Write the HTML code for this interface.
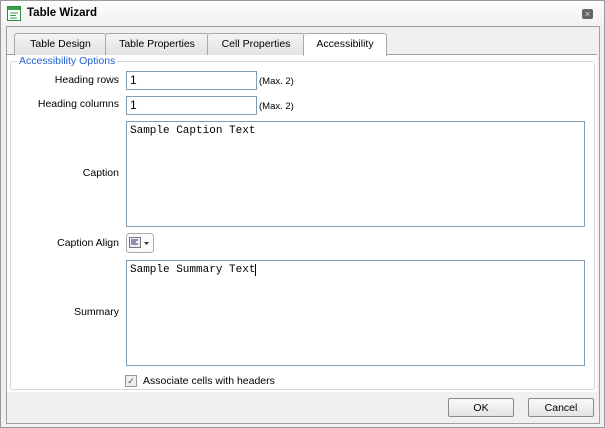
<!DOCTYPE html>
<html><head><style>
body{margin:0;width:605px;height:428px;background:#fff;font-family:"Liberation Sans",sans-serif;font-size:10.5px;color:#000;position:relative;overflow:hidden}
.a{position:absolute}
.outer{left:0;top:0;width:603px;height:426px;border:1px solid #9a9a9a;background:linear-gradient(#fcfcfc,#f0f0f0 30px,#f0f0f0)}
.title{left:27px;top:7px;font-weight:bold;font-size:11.5px}
.strip{left:6px;top:26px;width:592px;height:396px;border:1px solid #a0a0a0;background:#f0f0f0}
.tab{top:33px;height:21px;border:1px solid #a8a8a8;border-bottom:none;border-radius:3px 3px 0 0;background:linear-gradient(#f4f4f4,#e2e2e2);text-align:center;line-height:21px}
.panel{left:7px;top:54px;width:590px;height:337px;background:#fff;border-top:1px solid #a0a0a0}
.fs{left:10px;top:61px;width:583px;height:327px;border:1px solid #d8d8d0;border-radius:3px}
.lg{left:17px;top:55px;color:#2060d0;background:#fff;padding:0 2px}
.lbl{text-align:right;width:111px;left:8px}
.inp{border:1px solid #7f9db9;background:#fff;font-size:12px;padding-left:3px;box-sizing:border-box;line-height:17px}
.ta{border:1px solid #7f9db9;background:#fff;font-family:"Liberation Mono",monospace;font-size:11px;padding:3px 3px;box-sizing:border-box}
.btn{top:398px;width:66px;height:19px;border:1px solid #8a8a8a;border-radius:2px;background:linear-gradient(#fafafa,#e4e4e4);text-align:center;line-height:18px;box-sizing:border-box}
</style></head><body>
<div class="a outer"></div>
<svg class="a" style="left:7px;top:6px" width="14" height="15"><rect x="0.5" y="0.5" width="13" height="14" fill="#fff" stroke="#2e8b3a"/><rect x="1" y="1" width="12" height="3" fill="#3aa04a"/><path d="M3 7h8M3 9.5h6M3 12h7" stroke="#3aa04a"/></svg>
<div class="a title">Table Wizard</div>
<div class="a" style="left:582px;top:9px;width:11px;height:10px;background:#666;border-radius:2px;color:#ddd;font-size:9px;line-height:10px;text-align:center">×</div>
<div class="a strip"></div>
<div class="a panel"></div>
<div class="a tab" style="left:14px;width:91px">Table Design</div>
<div class="a tab" style="left:105px;width:102px">Table Properties</div>
<div class="a tab" style="left:207px;width:96px">Cell Properties</div>
<div class="a tab" style="left:303px;width:82px;background:#fff;height:22px">Accessibility</div>
<div class="a fs"></div>
<div class="a lg">Accessibility Options</div>
<div class="a lbl" style="top:74px">Heading rows</div>
<div class="a inp" style="left:126px;top:71px;width:131px;height:19px">1</div>
<div class="a" style="left:259px;top:76px;font-size:9.5px">(Max. 2)</div>
<div class="a lbl" style="top:98px">Heading columns</div>
<div class="a inp" style="left:126px;top:96px;width:131px;height:19px">1</div>
<div class="a" style="left:259px;top:101px;font-size:9.5px">(Max. 2)</div>
<div class="a lbl" style="top:167px">Caption</div>
<div class="a ta" style="left:126px;top:121px;width:459px;height:106px">Sample Caption Text</div>
<div class="a lbl" style="top:237px">Caption Align</div>
<div class="a" style="left:126px;top:233px;width:28px;height:20px;border:1px solid #aaa;border-radius:3px;box-sizing:border-box;background:#fafafa"></div>
<svg class="a" style="left:129px;top:237px" width="22" height="12"><rect x="0.5" y="0.5" width="11" height="10" fill="#eef" stroke="#777"/><path d="M2 3h7M2 5h5M2 7h7" stroke="#335"/><path d="M15 5h5l-2.5 3z" fill="#333"/></svg>
<div class="a lbl" style="top:306px">Summary</div>
<div class="a ta" style="left:126px;top:260px;width:459px;height:106px">Sample Summary Text<span style="border-left:1px solid #000"> </span></div>
<div class="a" style="left:125px;top:375px;width:10px;height:10px;border:1px solid #999;background:#eee;font-size:9px;line-height:10px;text-align:center;color:#555">✓</div>
<div class="a" style="left:143px;top:375px">Associate cells with headers</div>
<div class="a btn" style="left:448px">OK</div>
<div class="a btn" style="left:528px">Cancel</div>
</body></html>
